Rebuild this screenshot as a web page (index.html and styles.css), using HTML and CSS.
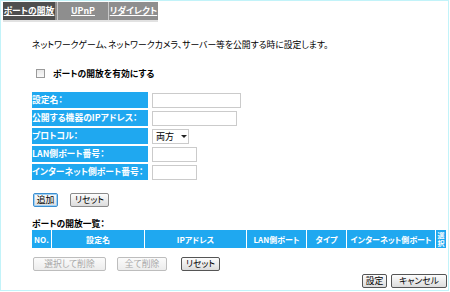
FILE: index.html
```html
<!DOCTYPE html>
<html lang="ja">
<head>
<meta charset="utf-8">
<title>ポートの開放</title>
<link rel="stylesheet" href="styles.css">
</head>
<body>
<div class="page">
  <div class="tabs">
    <a class="tab active">ポートの開放</a>
    <a class="tab">UPnP</a>
    <a class="tab">リダイレクト</a>
  </div>
  <div class="content">
    <p class="desc">ネットワークゲーム、ネットワークカメラ、サーバー等を公開する時に設定します。</p>
    <label class="enable"><span class="cb"></span>ポートの開放を有効にする</label>
    <div class="form">
      <div class="row"><span class="lbl">設定名：</span><span class="input w88"></span></div>
      <div class="row"><span class="lbl">公開する機器のIPアドレス：</span><span class="input w84"></span></div>
      <div class="row"><span class="lbl">プロトコル：</span><span class="select">両方<span class="arrow"></span></span></div>
      <div class="row"><span class="lbl">LAN側ポート番号：</span><span class="input w44"></span></div>
      <div class="row"><span class="lbl">インターネット側ポート番号：</span><span class="input w44"></span></div>
    </div>
    <div class="btnrow first">
      <button class="btn default">追加</button>
      <button class="btn">リセット</button>
    </div>
    <div class="list-title">ポートの開放一覧：</div>
    <div class="thead">
      <span class="th">NO.</span>
      <span class="th">設定名</span>
      <span class="th">IPアドレス</span>
      <span class="th">LAN側ポート</span>
      <span class="th">タイプ</span>
      <span class="th">インターネット側ポート</span>
      <span class="th sel"><span class="ch">選</span><span class="ch">択</span></span>
    </div>
    <div class="btnrow second">
      <button class="btn disabled del">選択して削除</button>
      <button class="btn disabled delall">全て削除</button>
      <button class="btn dark">リセット</button>
    </div>
    <div class="footer">
      <button class="btn dark">設定</button>
      <button class="btn dark cancel">キャンセル</button>
    </div>
  </div>
</div>
</body>
</html>
```
FILE: styles.css
```css
* { box-sizing: border-box; }
html, body { margin: 0; padding: 0; background: #fff; }
body {
  font-family: "Noto Sans CJK JP", "Noto Sans", sans-serif;
  font-size: 8.8px;
  font-feature-settings: "palt";
  color: #000;
}
.page {
  width: 449px;
  height: 291px;
  border: 1px solid #c2f3f9;
  padding-top: 1px;
}
.tabs {
  display: flex;
  margin-left: 2px;
  width: 155px;
  height: 18px;
  background: #8e8e8e;
  box-shadow: 0 2px 0 #e2e2e2;
}
.tab {
  display: flex;
  align-items: center;
  justify-content: center;
  color: #fff;
  font-weight: bold;
  text-decoration: underline;
  line-height: 1;
  font-size: 8.8px;
  white-space: nowrap;
}
.tab.active { width: 52px; background: #4f4f4f; }
.tab:nth-child(2) { width: 51px; border-left: 1px solid #c9c9c9; margin-left: 2px; }
.tab:nth-child(3) { flex: 1; border-left: 1px solid #c9c9c9; }
.content { margin-left: 31px; }
.desc { margin: 20px 0 0; line-height: 10px; height: 10px; }
.enable {
  display: flex;
  align-items: center;
  gap: 8px;
  margin: 18px 0 0 4px;
  height: 10px;
  font-weight: bold;
}
.cb {
  width: 9px; height: 9px;
  border: 1px solid #9a9a9a;
  background: linear-gradient(#e8e8e8, #fafafa);
}
.form {
  display: flex;
  flex-direction: column;
  gap: 2px;
  margin-top: 14px;
}
.row { display: flex; align-items: center; gap: 4px; height: 16px; }
.lbl {
  width: 116px;
  height: 16px;
  background: #1fa8f0;
  color: #fff;
  font-weight: bold;
  line-height: 16px;
  white-space: nowrap;
  overflow: hidden;
}
.input {
  display: block;
  height: 15px;
  border: 1px solid #cbcbcb;
  background: #fff;
}
.w88 { width: 89px; }
.w84 { width: 85px; }
.w44 { width: 45px; }
.select {
  display: flex;
  align-items: center;
  width: 37px;
  height: 15px;
  border: 1px solid #cbcbcb;
  padding-left: 3px;
  gap: 7px;
  font-size: 9px;
}
.arrow {
  width: 0; height: 0;
  border-left: 3px solid transparent;
  border-right: 3px solid transparent;
  border-top: 3px solid #222;
}
.btnrow { display: flex; align-items: center; }
.btnrow.first { margin-top: 13px; gap: 12px; padding-left: 1px; }
.btn {
  font-family: inherit;
  font-size: 8.8px;
  font-feature-settings: "palt";
  height: 14px;
  padding: 0 4px;
  line-height: 12px;
  border: 1px solid #8a8a8a;
  border-radius: 2px;
  background: linear-gradient(#fdfdfd, #dcdcdc);
  color: #000;
  margin: 0;
}
.btn.default { border-color: #3d8fd0; box-shadow: inset 0 0 0 1px #9fd0f5; width: 25px; padding: 0; }
.btnrow.first .btn:nth-child(2) { width: 39px; padding: 0; }
.btn.dark { border-color: #555; }
.btn.disabled { color: #a8a8a8; border-color: #bdbdbd; background: linear-gradient(#fbfbfb, #ececec); }
.list-title { margin-top: 12px; line-height: 10px; height: 10px; font-weight: bold; }
.thead {
  display: grid;
  grid-template-columns: 19px 92px 101px 59px 39px 88px 10px;
  gap: 1px;
  margin-top: 1px;
  height: 18px;
}
.th {
  background: #1fa8f0;
  color: #fff;
  font-weight: bold;
  font-size: 8px;
  display: flex;
  align-items: center;
  justify-content: center;
  white-space: nowrap;
  overflow: hidden;
}
.th.sel { flex-direction: column; font-size: 7px; }
.ch { display: block; line-height: 8.5px; height: 8.5px; }
.btnrow.second { margin-top: 9px; gap: 11px; padding-left: 1px; }
.btn.del { width: 73px; }
.btn.delall { width: 50px; }
.btnrow.second .btn.dark { width: 39px; margin-left: 3px; padding: 0; }
.footer {
  display: flex;
  justify-content: flex-end;
  gap: 4px;
  margin-top: 3px;
  width: 415px;
}
.footer .btn { width: 25px; padding: 0; }
.footer .btn.cancel { width: 56px; }
```
